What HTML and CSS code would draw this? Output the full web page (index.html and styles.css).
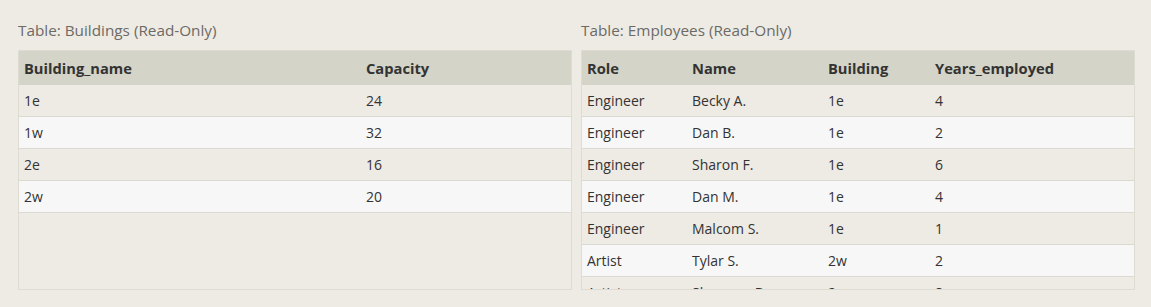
FILE: index.html
```html
<!DOCTYPE html>
<html>
<head>
<meta charset="utf-8">
<link rel="stylesheet" href="styles.css">
</head>
<body>
<div class="tables">
  <section class="panel">
    <div class="title">Table: Buildings (Read-Only)</div>
    <div class="box">
      <table class="grid buildings">
        <thead><tr><th class="c-bname">Building_name</th><th>Capacity</th></tr></thead>
        <tbody>
          <tr><td>1e</td><td>24</td></tr>
          <tr><td>1w</td><td>32</td></tr>
          <tr><td>2e</td><td>16</td></tr>
          <tr><td>2w</td><td>20</td></tr>
        </tbody>
      </table>
    </div>
  </section>
  <section class="panel">
    <div class="title">Table: Employees (Read-Only)</div>
    <div class="box">
      <table class="grid employees">
        <thead><tr><th class="c-role">Role</th><th class="c-name">Name</th><th class="c-bld">Building</th><th>Years_employed</th></tr></thead>
        <tbody>
          <tr><td>Engineer</td><td>Becky A.</td><td>1e</td><td>4</td></tr>
          <tr><td>Engineer</td><td>Dan B.</td><td>1e</td><td>2</td></tr>
          <tr><td>Engineer</td><td>Sharon F.</td><td>1e</td><td>6</td></tr>
          <tr><td>Engineer</td><td>Dan M.</td><td>1e</td><td>4</td></tr>
          <tr><td>Engineer</td><td>Malcom S.</td><td>1e</td><td>1</td></tr>
          <tr><td>Artist</td><td>Tylar S.</td><td>2w</td><td>2</td></tr>
          <tr><td>Artist</td><td>Sherman D.</td><td>2w</td><td>8</td></tr>
          <tr><td>Artist</td><td>Jakob J.</td><td>2w</td><td>6</td></tr>
          <tr><td>Artist</td><td>Lillia A.</td><td>2w</td><td>7</td></tr>
          <tr><td>Artist</td><td>Brandon J.</td><td>2w</td><td>7</td></tr>
          <tr><td>Manager</td><td>Scott K.</td><td>1e</td><td>9</td></tr>
          <tr><td>Manager</td><td>Shirlee M.</td><td>1e</td><td>3</td></tr>
          <tr><td>Manager</td><td>Daria O.</td><td>2w</td><td>6</td></tr>
        </tbody>
      </table>
    </div>
  </section>
</div>
</body>
</html>
```
FILE: styles.css
```css
html, body {
  margin: 0;
  padding: 0;
  background: #eeeae4;
}
body {
  font-family: "Open Sans", "Noto Sans", sans-serif;
  font-size: 14px;
  color: #333;
}
.tables {
  display: grid;
  grid-template-columns: 554px 554px;
  column-gap: 9px;
  padding: 20px 0 0 18px;
}
.title {
  height: 20px;
  line-height: 20px;
  font-size: 15.3px;
  color: #6b6b66;
  margin-bottom: 10px;
}
.box {
  height: 238px;
  border: 1px solid #dedbd3;
  overflow: hidden;
}
.grid {
  width: 100%;
  border-collapse: collapse;
  table-layout: fixed;
}
.grid th, .grid td {
  text-align: left;
  padding: 0 5px;
  white-space: nowrap;
}
.grid th {
  height: 34px;
  background: #d4d4c8;
  font-weight: bold;
  font-size: 14.7px;
  color: #333;
}
.grid td {
  height: 31px;
  border-bottom: 1px solid #dcd9d2;
}
.grid tbody tr:nth-child(odd) td {
  background: #eeeae4;
}
.grid tbody tr:nth-child(even) td {
  background: #f7f7f7;
}
.c-bname { width: 332px; }
.c-role { width: 95px; }
.c-name { width: 126px; }
.c-bld { width: 97px; }
```
